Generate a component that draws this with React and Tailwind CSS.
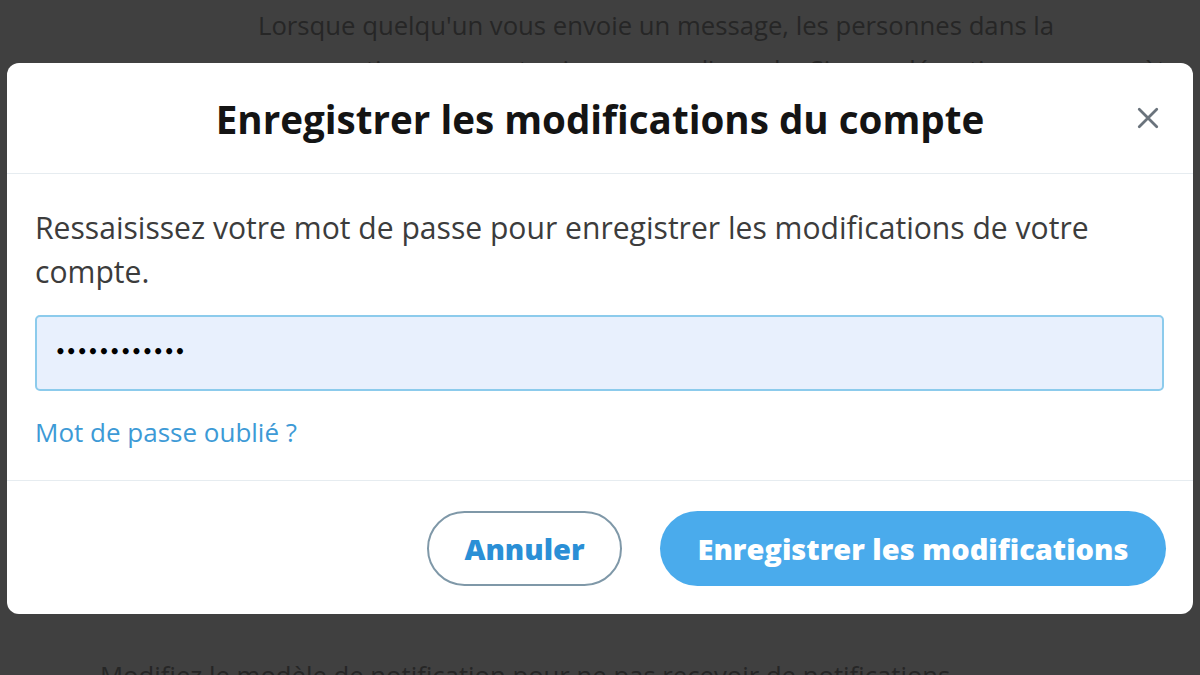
import React from "react";

export default function App() {
  const font = { fontFamily: '"Open Sans", "Noto Sans", sans-serif' };
  return (
    <div className="relative w-[1200px] h-[675px] overflow-hidden bg-[#404040]" style={font}>
      {/* dimmed page behind */}
      <div className="flex flex-col pl-[258px] pt-[4px] text-[25.7px] leading-[44px] text-[#262626]">
        <p>Lorsque quelqu'un vous envoie un message, les personnes dans la</p>
        <p>conversation pourront voir que vous l'avez lu. Si vous désactivez ce paramètre</p>
      </div>
      <div className="absolute left-[100px] top-[654px] text-[25.7px] leading-[44px] text-[#262626]">
        Modifiez le modèle de notification pour ne pas recevoir de notifications
      </div>

      {/* modal */}
      <div className="absolute left-[7px] top-[63px] w-[1186px] h-[551px] rounded-[12px] bg-white flex flex-col">
        <div className="relative h-[111px] flex items-center justify-center border-b border-[#e6ecf0]">
          <h1 className="text-[38.6px] font-bold text-[#141414] pt-[3px]">
            Enregistrer les modifications du compte
          </h1>
          <button className="absolute right-[30px] top-[40px] w-[30px] h-[30px] flex items-center justify-center text-[#6a737c]">
            <svg viewBox="0 0 24 24" width="30" height="30" fill="none" stroke="currentColor" strokeWidth="2.2" strokeLinecap="round">
              <path d="M5 5 L19 19 M19 5 L5 19" />
            </svg>
          </button>
        </div>
        <div className="flex flex-col px-[28px] pt-[32px] pb-[32px] border-b border-[#e6ecf0]">
          <p className="text-[30.1px] leading-[44px] text-[#3c3c3c] whitespace-nowrap">
            Ressaisissez votre mot de passe pour enregistrer les modifications de votre
            <br />
            compte.
          </p>
          <div className="mt-[21px] mr-[1px] h-[76px] rounded-[5px] border-2 border-[#8ccbec] bg-[#e8f0fd] flex items-center px-[18px]">
            <span className="text-[17px] tracking-[0px] text-black font-bold" style={{ fontFamily: '"DejaVu Sans", sans-serif' }}>
              ••••••••••••
            </span>
          </div>
          <a className="mt-[25px] text-[26px] leading-[32px] text-[#3d9ad6]">Mot de passe oublié ?</a>
        </div>
        <div className="flex-1 flex items-start justify-end gap-[38px] pt-[30px] pr-[27px]">
          <button className="w-[195px] h-[75px] rounded-full border-2 border-[#7f98a8] text-[29px] font-extrabold text-[#2a8fd6]">
            Annuler
          </button>
          <button className="w-[506px] h-[75px] rounded-full bg-[#4aabec] text-[29px] font-extrabold text-white">
            Enregistrer les modifications
          </button>
        </div>
      </div>
    </div>
  );
}
